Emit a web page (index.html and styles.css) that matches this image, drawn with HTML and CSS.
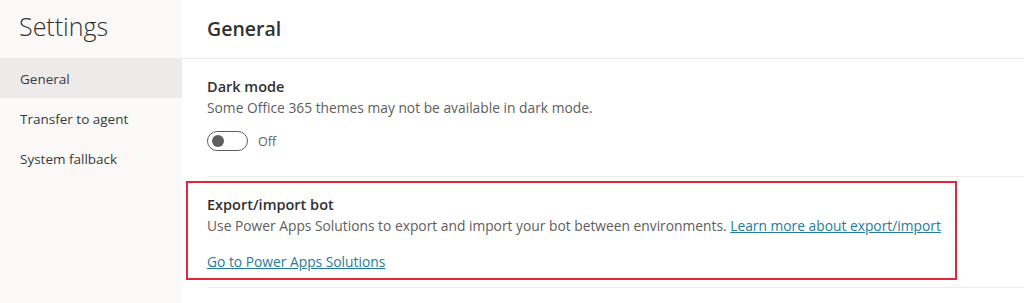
FILE: index.html
```html
<!DOCTYPE html>
<html lang="en">
<head>
    <meta charset="UTF-8">
    <title>Settings</title>
    <link rel="stylesheet" href="styles.css">
</head>
<body>
    <div class="sidebar">
        <div class="sidebar-title">Settings</div>
        <div class="nav-item active">General</div>
        <div class="nav-item">Transfer to agent</div>
        <div class="nav-item">System fallback</div>
    </div>
    <div class="main">
        <div class="main-header">General</div>

        <div class="section">
            <div class="section-title">Dark mode</div>
            <div class="section-desc">Some Office 365 themes may not be available in dark mode.</div>
            <div class="toggle-row">
                <span class="toggle"><span class="knob"></span></span>
                <span class="toggle-label">Off</span>
            </div>
        </div>

        <div class="section export">
            <div class="highlight"></div>
            <div class="section-title">Export/import bot</div>
            <div class="section-desc">Use Power Apps Solutions to export and import your bot between environments. <a href="#">Learn more about export/import</a></div>
            <div class="link-row"><a href="#">Go to Power Apps Solutions</a></div>
        </div>
    </div>
</body>
</html>
```

FILE: styles.css
```css
/* 全体 */
body {
    margin: 0;
    font-family: 'Open Sans', 'Noto Sans', sans-serif;
    color: #323130;
    background-color: #fff;
    display: flex;
    height: 100vh;
    overflow: hidden;
}

/* サイドバー */
.sidebar {
    width: 182px;
    flex-shrink: 0;
    background-color: #faf9f8;
}

.sidebar-title {
    font-size: 25px;
    font-weight: 300;
    height: 58px;
    line-height: 52px;
    padding-left: 19px;
}

.nav-item {
    height: 38px;
    line-height: 38px;
    padding: 2px 0 0 20px;
    font-size: 13.5px;
    color: #3b3a39;
}

.nav-item.active {
    background-color: #edebe9;
}

/* メイン */
.main {
    flex: 1;
}

.main-header {
    height: 58px;
    line-height: 57px;
    padding-left: 25px;
    font-size: 19.5px;
    font-weight: 600;
    border-bottom: 1px solid #edebe9;
}

.section {
    margin-left: 25px;
    padding: 18px 0 25px;
    border-bottom: 1px solid #edebe9;
    position: relative;
}

.section.export {
    padding: 18px 0 15px;
}

.section-title {
    font-size: 14.5px;
    font-weight: 600;
    line-height: 20px;
}

.section-desc {
    font-size: 13.8px;
    line-height: 20px;
    padding-top: 1px;
    margin-bottom: -1px;
    color: #605e5c;
}

a {
    color: #1f7c9c;
    text-decoration: underline;
}

.link-row {
    margin-top: 17px;
    font-size: 13.8px;
    line-height: 20px;
}

/* トグル */
.toggle-row {
    display: flex;
    align-items: center;
    margin-top: 14px;
}

.toggle {
    width: 41px;
    height: 20px;
    box-sizing: border-box;
    border: 1px solid #605e5c;
    border-radius: 10px;
    display: flex;
    align-items: center;
    padding-left: 4px;
}

.knob {
    width: 12px;
    height: 12px;
    border-radius: 50%;
    background-color: #605e5c;
}

.toggle-label {
    margin-left: 10px;
    font-size: 12.5px;
    color: #605e5c;
}

/* 強調枠 */
.highlight {
    position: absolute;
    left: -21px;
    top: 4px;
    width: 771px;
    height: 99px;
    box-sizing: border-box;
    border: 2px solid #e0283a;
    pointer-events: none;
}
```
